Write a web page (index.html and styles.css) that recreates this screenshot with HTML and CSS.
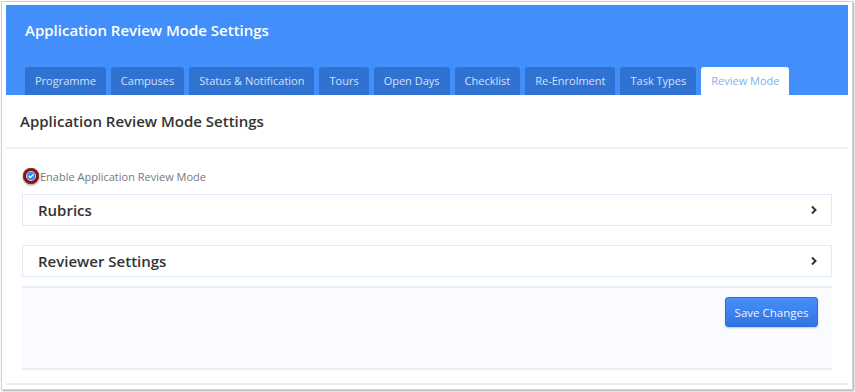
FILE: index.html
```html
<!DOCTYPE html>
<html>
<head>
    <title>Application Review Mode Settings</title>
    <link rel="stylesheet" href="styles.css">
</head>
<body>
    <div class="frame">
        <div class="page-header">
            <h1 class="page-title">Application Review Mode Settings</h1>
            <div class="tabs">
                <span class="tab">Programme</span>
                <span class="tab">Campuses</span>
                <span class="tab">Status &amp; Notification</span>
                <span class="tab">Tours</span>
                <span class="tab">Open Days</span>
                <span class="tab">Checklist</span>
                <span class="tab">Re-Enrolment</span>
                <span class="tab">Task Types</span>
                <span class="tab active">Review Mode</span>
            </div>
        </div>

        <div class="section-head">
            <h2>Application Review Mode Settings</h2>
        </div>

        <div class="section-body">
            <label class="check-row">
                <svg class="check-mark" width="18" height="18" viewBox="0 0 18 18">
                    <circle cx="9" cy="9" r="8" fill="#7d1418"/>
                    <circle cx="9" cy="9" r="7.6" fill="none" stroke="#a52a2e" stroke-width="0.8"/>
                    <circle cx="9" cy="9" r="4.6" fill="#3d86e8" stroke="#e6eefa" stroke-width="0.8"/>
                    <polyline points="6.9,9.1 8.4,10.5 11.1,7.6" fill="none" stroke="#fff" stroke-width="1.3" stroke-linecap="round" stroke-linejoin="round"/>
                </svg>
                <span>Enable Application Review Mode</span>
            </label>

            <div class="collapse-panel">
                <span>Rubrics</span>
                <svg width="8" height="10" viewBox="0 0 8 10"><polyline points="2,1.5 5.5,5 2,8.5" fill="none" stroke="#333" stroke-width="2"/></svg>
            </div>

            <div class="collapse-panel">
                <span>Reviewer Settings</span>
                <svg width="8" height="10" viewBox="0 0 8 10"><polyline points="2,1.5 5.5,5 2,8.5" fill="none" stroke="#333" stroke-width="2"/></svg>
            </div>

            <div class="form-footer">
                <button class="save-button">Save Changes</button>
            </div>
        </div>
        <div class="bottom-rule"></div>
    </div>
</body>
</html>
```

FILE: styles.css
```css
body {
    font-family: "Open Sans", Arial, sans-serif;
    margin: 0;
    padding: 0;
    background-color: white;
}
.frame {
    margin: 1px 2px 2px 1px;
    padding: 3px 4px 3px 4px;
    border: 1px solid #d2d2d2;
    box-shadow: 1px 1px 2px rgba(0, 0, 0, 0.35);
    box-sizing: border-box;
    height: 389px;
}
.page-header {
    background-color: #428efa;
    height: 90px;
    padding: 0 0 0 19px;
    display: flex;
    flex-direction: column;
    justify-content: space-between;
}
.page-title {
    margin: 0;
    padding-top: 15px;
    font-size: 15px;
    font-weight: 600;
    color: white;
}
.tabs {
    display: flex;
    gap: 5px;
}
.tab {
    height: 28px;
    line-height: 28px;
    padding: 0 10px;
    font-size: 11px;
    color: #d3e1f6;
    background-color: #3072d2;
    border-radius: 3px 3px 0 0;
}
.tab.active {
    background-color: white;
    color: #82b0f3;
}
.section-head {
    height: 52px;
    border-bottom: 2px solid #eaf1fa;
    display: flex;
    align-items: center;
    padding-left: 14px;
}
.section-head h2 {
    margin: 0;
    font-size: 15px;
    font-weight: 600;
    color: #333;
}
.section-body {
    padding: 18px 16px 0 16px;
}
.check-row {
    display: flex;
    align-items: center;
    font-size: 11px;
    color: #777;
    height: 18px;
}
.check-mark {
    filter: drop-shadow(0 1px 1px rgba(0, 0, 0, 0.45));
}
.collapse-panel {
    margin-top: 9px;
    height: 30px;
    border: 1px solid #e1ebf7;
    display: flex;
    align-items: center;
    justify-content: space-between;
    padding: 0 13px 0 15px;
    font-size: 15px;
    font-weight: 600;
    color: #333;
}
.collapse-panel + .collapse-panel {
    margin-top: 19px;
}
.form-footer {
    margin-top: 9px;
    background-color: #f9fbfe;
    border-top: 2px solid #e8eff8;
    border-bottom: 2px solid #e8eff8;
    display: flex;
    justify-content: flex-end;
    align-items: flex-start;
    padding: 9px 14px 0 0;
    box-sizing: border-box;
    height: 84px;
}
.save-button {
    font-family: "Open Sans", Arial, sans-serif;
    font-size: 11.5px;
    color: #eef4fe;
    background: linear-gradient(#4790f6, #2f74e4);
    border: 1px solid #2c6fd8;
    border-radius: 3px;
    width: 93px;
    height: 30px;
    box-shadow: 0 1px 2px rgba(0, 0, 0, 0.2);
}
.bottom-rule {
    margin-top: 13px;
    border-top: 2px solid #e8eff8;
}
```
